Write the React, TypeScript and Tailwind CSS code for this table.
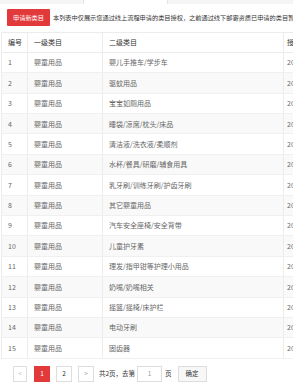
import React from 'react';

const rows = [
  '婴儿手推车/学步车',
  '驱蚊用品',
  '宝宝如厕用品',
  '睡袋/凉席/枕头/床品',
  '清洁液/洗衣液/柔顺剂',
  '水杯/餐具/研磨/辅食用具',
  '乳牙刷/训练牙刷/护齿牙刷',
  '其它婴童用品',
  '汽车安全座椅/安全背带',
  '儿童护牙素',
  '理发/指甲钳等护理小用品',
  '奶嘴/奶嘴相关',
  '摇篮/摇椅/床护栏',
  '电动牙刷',
  '固齿器',
];

const font = { fontFamily: '"Noto Sans CJK SC", "Noto Sans", sans-serif' };

export default function App() {
  return (
    <div className="w-[293px] h-[385px] overflow-hidden bg-white text-[#333]" style={font}>
      {/* tab strip cut off at top */}
      <div className="flex h-[4px] bg-[#f5f5f5]">
        <div className="w-[83px]" />
        <div className="w-[85px] bg-white border-x border-[#e5e5e5]" />
      </div>

      <div className="flex items-center gap-[3px] pl-[7px] mt-[5px] h-[17px] whitespace-nowrap">
        <button className="h-[17px] w-[43px] shrink-0 bg-[#e2393a] text-white text-[6.2px] rounded-[1px]">申请新类目</button>
        <span className="text-[6.2px] text-[#333]">本列表中仅展示您通过线上流程申请的类目授权，之前通过线下邮寄资质已申请的类目暂不展示</span>
      </div>

      <div className="mt-[5.5px] ml-[1px] border-l border-t border-[#ececec]">
        <div className="flex h-[20.4px] items-center text-[7px] text-[#333] border-b border-[#ececec] whitespace-nowrap">
          <div className="w-[26px] h-full flex items-center pl-[6px] border-r border-[#ececec]">编号</div>
          <div className="w-[75px] h-full flex items-center pl-[6px] border-r border-[#ececec]">一级类目</div>
          <div className="w-[181px] h-full flex items-center pl-[6px] border-r border-[#ececec]">二级类目</div>
          <div className="flex-1 h-full flex items-center pl-[3px] overflow-hidden">授权时间</div>
        </div>
        {rows.map((name, i) => (
          <div
            key={i}
            className={`flex h-[20.4px] items-center text-[7px] text-[#666] border-b border-[#f0f0f0] whitespace-nowrap ${i % 2 === 1 ? 'bg-[#f9f9f9]' : 'bg-white'}`}
          >
            <div className="w-[26px] h-full flex items-center pl-[6px] border-r border-[#ececec]">{i + 1}</div>
            <div className="w-[75px] h-full flex items-center pl-[6px] border-r border-[#ececec]">婴童用品</div>
            <div className="w-[181px] h-full flex items-center pl-[6px] border-r border-[#ececec]">{name}</div>
            <div className="flex-1 h-full flex items-center pl-[3px] overflow-hidden">2018-06-12</div>
          </div>
        ))}
      </div>

      <div className="flex items-center mt-[7px] pl-[13px] h-[16px] text-[6.5px] text-[#666] whitespace-nowrap">
        <div className="w-[14px] h-[16px] border border-[#ddd] flex items-center justify-center text-[#bbb]">&lt;</div>
        <div className="w-[16px] h-[16px] ml-[7px] bg-[#e2393a] text-white flex items-center justify-center">1</div>
        <div className="w-[16px] h-[16px] ml-[6px] border border-[#ddd] flex items-center justify-center text-[#333]">2</div>
        <div className="w-[16px] h-[16px] ml-[6px] border border-[#ddd] flex items-center justify-center text-[#999]">&gt;</div>
        <span className="ml-[5px] text-[#333]">共2页，去第</span>
        <div className="w-[25px] h-[16px] ml-[2px] border border-[#ddd] flex items-center justify-center text-[#999]">1</div>
        <span className="ml-[3px] text-[#333]">页</span>
        <div className="w-[29px] h-[16px] ml-[6px] border border-[#ddd] bg-[#f7f7f7] flex items-center justify-center text-[#333]">确定</div>
      </div>
    </div>
  );
}
